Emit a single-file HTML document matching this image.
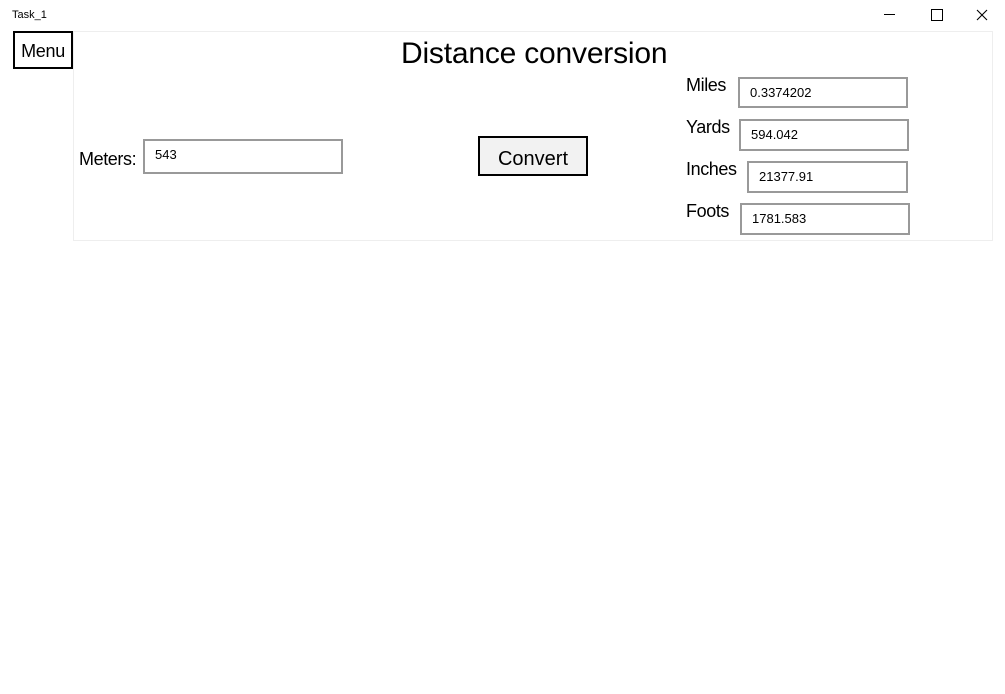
<!DOCTYPE html>
<html><head><style>
body{margin:0;width:1005px;height:694px;background:#fff;font-family:"Liberation Sans",sans-serif;position:relative;overflow:hidden;color:#000}
.a{position:absolute}
.box{position:absolute;border:2px solid #999;box-sizing:border-box;font-size:13px;padding-left:10px;line-height:27px;background:#fff}
.lbl{position:absolute;font-size:18px;letter-spacing:-0.4px}
</style></head><body>
<div class="a" style="left:12px;top:9px;font-size:11px">Task_1</div>
<div class="a" style="left:884px;top:14px;width:11px;height:1px;background:#000"></div>
<div class="a" style="left:931px;top:9px;width:10px;height:10px;border:1px solid #000"></div>
<svg class="a" style="left:976px;top:9px" width="12" height="12"><path d="M1 1L11 11M11 1L1 11" stroke="#000" stroke-width="1.1"/></svg>
<div class="a" style="left:73px;top:31px;width:918px;height:208px;border:1px solid #eee"></div>
<div class="a" style="left:13px;top:31px;width:60px;height:38px;border:2px solid #000;box-sizing:border-box;font-size:18px;line-height:36px;text-align:center;letter-spacing:-0.3px">Menu</div>
<div class="a" style="left:401px;top:37px;font-size:30px;letter-spacing:-0.2px">Distance conversion</div>
<div class="lbl" style="left:79px;top:149px">Meters:</div>
<div class="box" style="left:143px;top:139px;width:200px;height:35px;line-height:28px">543</div>
<div class="a" style="left:478px;top:136px;width:110px;height:40px;border:2px solid #000;box-sizing:border-box;background:#f2f2f2;font-size:20px;line-height:42px;text-align:center">Convert</div>
<div class="lbl" style="left:686px;top:75px">Miles</div>
<div class="box" style="left:738px;top:77px;width:170px;height:31px">0.3374202</div>
<div class="lbl" style="left:686px;top:117px">Yards</div>
<div class="box" style="left:739px;top:119px;width:170px;height:32px">594.042</div>
<div class="lbl" style="left:686px;top:159px">Inches</div>
<div class="box" style="left:747px;top:161px;width:161px;height:32px">21377.91</div>
<div class="lbl" style="left:686px;top:201px">Foots</div>
<div class="box" style="left:740px;top:203px;width:170px;height:32px">1781.583</div>
</body></html>
